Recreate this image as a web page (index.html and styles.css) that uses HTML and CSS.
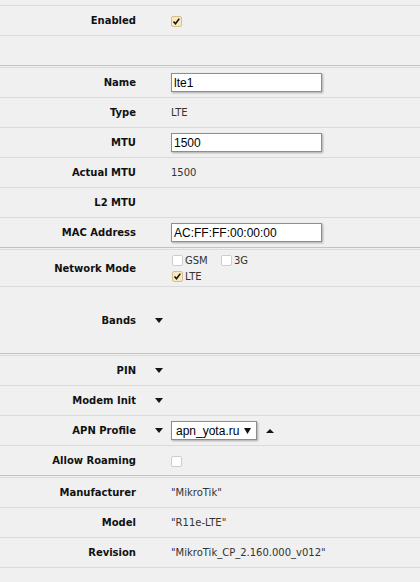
FILE: index.html
```html
<!DOCTYPE html>
<html>
<head>
<meta charset="utf-8">
<link rel="stylesheet" href="styles.css">
</head>
<body>
<div class="top"></div>

<div class="section">
  <div class="row">
    <div class="label">Enabled</div><div class="tog"></div>
    <div class="val"><span class="cb on"><svg viewBox="0 0 11 11" width="11" height="11"><path d="M2.5 5.5 L4.5 7.8 L8.3 2.6" fill="none" stroke="#111" stroke-width="1.6"/></svg></span></div>
  </div>
  <div class="row">
    <div class="label"></div><div class="tog"></div><div class="val"></div>
  </div>
</div>

<div class="section">
  <div class="row">
    <div class="label">Name</div><div class="tog"></div>
    <div class="val"><div class="input">lte1</div></div>
  </div>
  <div class="row">
    <div class="label">Type</div><div class="tog"></div>
    <div class="val text">LTE</div>
  </div>
  <div class="row">
    <div class="label">MTU</div><div class="tog"></div>
    <div class="val"><div class="input">1500</div></div>
  </div>
  <div class="row">
    <div class="label">Actual MTU</div><div class="tog"></div>
    <div class="val text">1500</div>
  </div>
  <div class="row">
    <div class="label">L2 MTU</div><div class="tog"></div>
    <div class="val text"></div>
  </div>
  <div class="row">
    <div class="label">MAC Address</div><div class="tog"></div>
    <div class="val"><div class="input">AC:FF:FF:00:00:00</div></div>
  </div>
</div>

<div class="section">
  <div class="row tall">
    <div class="label">Network Mode</div><div class="tog"></div>
    <div class="val">
      <div class="opts">
        <div class="optline">
          <label class="opt"><span class="cb"></span><span class="optname">GSM</span></label>
          <label class="opt"><span class="cb"></span><span class="optname">3G</span></label>
        </div>
        <div class="optline">
          <label class="opt"><span class="cb on"><svg viewBox="0 0 11 11" width="11" height="11"><path d="M2.5 5.5 L4.5 7.8 L8.3 2.6" fill="none" stroke="#111" stroke-width="1.6"/></svg></span><span class="optname">LTE</span></label>
        </div>
      </div>
    </div>
  </div>
  <div class="row xtall">
    <div class="label">Bands</div><div class="tog"><span class="arrow-down"></span></div>
    <div class="val"></div>
  </div>
</div>

<div class="section">
  <div class="row">
    <div class="label">PIN</div><div class="tog"><span class="arrow-down"></span></div>
    <div class="val"></div>
  </div>
  <div class="row">
    <div class="label">Modem Init</div><div class="tog"><span class="arrow-down"></span></div>
    <div class="val"></div>
  </div>
  <div class="row">
    <div class="label">APN Profile</div><div class="tog"><span class="arrow-down"></span></div>
    <div class="val">
      <div class="select"><span>apn_yota.ru</span><svg class="sel-arrow" viewBox="0 0 7 6" width="7" height="6"><path d="M0 0 H7 L3.5 6 Z" fill="#111"/></svg></div>
      <span class="arrow-up"></span>
    </div>
  </div>
  <div class="row">
    <div class="label">Allow Roaming</div><div class="tog"></div>
    <div class="val"><span class="cb"></span></div>
  </div>
</div>

<div class="section end">
  <div class="row">
    <div class="label">Manufacturer</div><div class="tog"></div>
    <div class="val text">"MikroTik"</div>
  </div>
  <div class="row">
    <div class="label">Model</div><div class="tog"></div>
    <div class="val text">"R11e-LTE"</div>
  </div>
  <div class="row">
    <div class="label">Revision</div><div class="tog"></div>
    <div class="val text">"MikroTik_CP_2.160.000_v012"</div>
  </div>
</div>
</body>
</html>
```

FILE: styles.css
```css
html, body {
  margin: 0;
  padding: 0;
  background: #f0f0f0;
}

body {
  font-family: "DejaVu Sans", Verdana, sans-serif;
  font-size: 10px;
  color: #1a1a1a;
}

.top {
  height: 5px;
}

.section {
  border-top: 1px solid #dadada;
  border-bottom: 1px solid #c2c2c2;
  margin-bottom: 1px;
}

.section.end {
  border-bottom: none;
}

.row {
  display: flex;
  align-items: center;
  min-height: 29px;
  border-bottom: 1px solid #dadada;
}

.section > .row:last-child {
  border-bottom: none;
}

.section.end > .row:last-child {
  border-bottom: 1px solid #dadada;
}

.row.tall {
  min-height: 36px;
}

.row.xtall {
  min-height: 66px;
}

.label {
  flex: none;
  width: 136px;
  text-align: right;
  font-weight: bold;
  color: #111;
}

.tog {
  flex: none;
  width: 35px;
  box-sizing: border-box;
  padding-left: 19px;
  display: flex;
  align-items: center;
}

.val {
  flex: 1;
  display: flex;
  align-items: center;
}

.text {
  color: #333;
}

.input {
  width: 151px;
  height: 19px;
  box-sizing: border-box;
  border: 1px solid #8e8e8e;
  background: #fff;
  box-shadow: 1px 1px 2px rgba(0, 0, 0, 0.3);
  padding: 0 2px;
  font-family: "Liberation Sans", Arial, sans-serif;
  font-size: 12px;
  color: #000;
  display: flex;
  align-items: center;
}

.cb {
  display: inline-block;
  width: 11px;
  height: 11px;
  box-sizing: border-box;
  border: 1px solid #cdcdcd;
  border-radius: 2px;
  background: #fff;
  position: relative;
  margin-top: 2px;
}

.cb svg {
  position: absolute;
  left: -1px;
  top: -1px;
}

.cb.on {
  background: #fbe8c2;
  border-color: #d8bd8d;
}

.opts {
  display: flex;
  flex-direction: column;
}

.optline {
  display: flex;
  height: 16px;
  align-items: center;
}

.opt {
  display: flex;
  align-items: center;
  width: 49px;
  padding-left: 1px;
  box-sizing: border-box;
}

.opt .cb {
  margin-top: 0;
}

.optname {
  margin-left: 2px;
  color: #333;
}

.arrow-down {
  display: block;
  width: 0;
  height: 0;
  border-left: 4px solid transparent;
  border-right: 4px solid transparent;
  border-top: 5px solid #151515;
}

.arrow-up {
  display: block;
  width: 0;
  height: 0;
  margin-left: 9px;
  border-left: 4px solid transparent;
  border-right: 4px solid transparent;
  border-bottom: 4px solid #151515;
}

.select {
  width: 86px;
  height: 19px;
  box-sizing: border-box;
  border: 1px solid #8e8e8e;
  background: #fff;
  box-shadow: 1px 1px 2px rgba(0, 0, 0, 0.3);
  padding: 0 5px 0 4px;
  font-family: "Liberation Sans", Arial, sans-serif;
  font-size: 12px;
  color: #000;
  display: flex;
  align-items: center;
  justify-content: space-between;
}
```
